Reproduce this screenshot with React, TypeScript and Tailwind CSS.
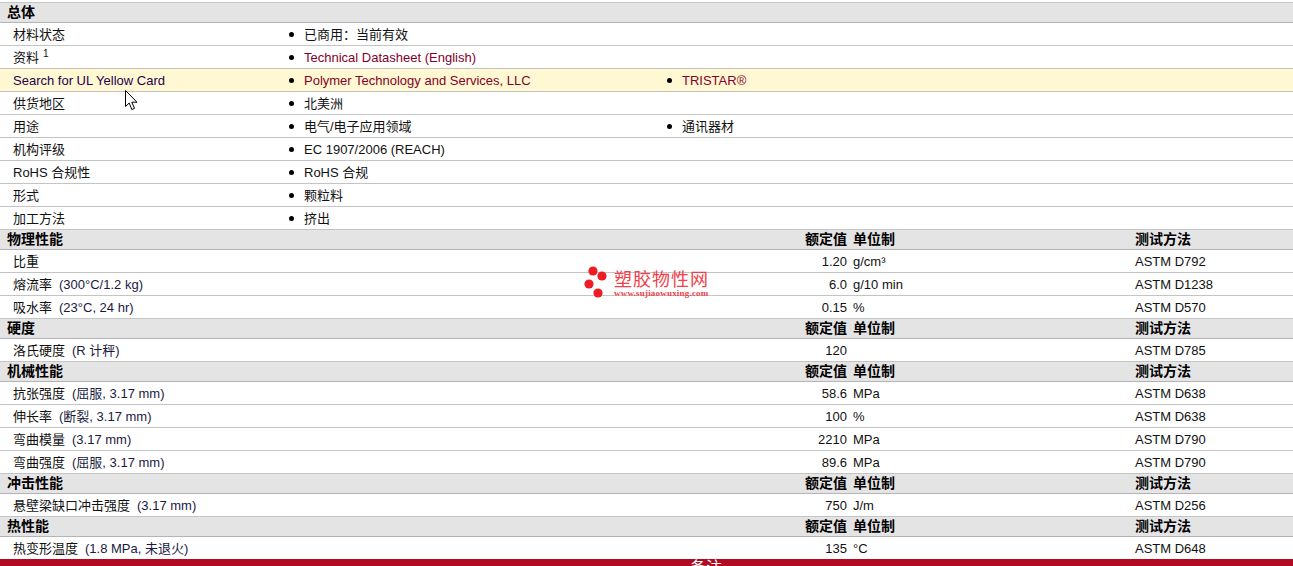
const sans = "font-['Liberation_Sans','Noto_Sans_CJK_SC',sans-serif]";

type Row = { label: string; note?: string; value?: string; unit?: string; method?: string };

function Bullet({ children, link }: { children: React.ReactNode; link?: boolean }) {
  return (
    <div className="flex items-center">
      <span className="ml-[1px] mr-[10px] h-[5px] w-[5px] rounded-full bg-black" />
      <span className={link ? "text-[#84002a]" : "text-[#111]"}>{children}</span>
    </div>
  );
}

function InfoRow({ label, sup, first, second, link, active }: { label: string; sup?: string; first: string; second?: string; link?: boolean; active?: boolean }) {
  return (
    <div className={`flex h-[23px] items-center border-b border-[#c4c4c4] pl-[13px] ${active ? "bg-[#fff8d2]" : "bg-white"}`}>
      <div className={`w-[275px] ${active ? "text-[#26004a]" : "text-[#111]"}`}>
        {label}
        {sup && <sup className="ml-[4px] text-[10px]">{sup}</sup>}
      </div>
      <div className="w-[378px]">
        <Bullet link={link}>{first}</Bullet>
      </div>
      {second && <Bullet link={link}>{second}</Bullet>}
    </div>
  );
}

function SectionHead({ title, columns = true }: { title: string; columns?: boolean }) {
  return (
    <div className="flex h-[20px] items-center border-b border-[#b4b4b8] bg-[#e5e4e4] pb-[2px] pl-[7px] text-[14px] font-bold text-black">
      <div className="w-[798px]">{title}</div>
      {columns && (
        <>
          <div className="w-[42px] text-right">额定值</div>
          <div className="ml-[6px] w-[282px]">单位制</div>
          <div>测试方法</div>
        </>
      )}
    </div>
  );
}

function DataRow({ label, note, value, unit, method }: Row) {
  return (
    <div className="flex h-[23px] items-center border-b border-[#c4c4c4] bg-white pl-[13px] text-[#111]">
      <div className="w-[792px]">
        {label}
        {note && <span className="ml-[7px] text-[#1a1a40]">{note}</span>}
      </div>
      <div className="w-[42px] text-right">{value}</div>
      <div className="ml-[6px] w-[282px]">{unit}</div>
      <div>{method}</div>
    </div>
  );
}

const sections: { title: string; rows: Row[] }[] = [
  {
    title: "物理性能",
    rows: [
      { label: "比重", value: "1.20", unit: "g/cm³", method: "ASTM D792" },
      { label: "熔流率", note: "(300°C/1.2 kg)", value: "6.0", unit: "g/10 min", method: "ASTM D1238" },
      { label: "吸水率", note: "(23°C, 24 hr)", value: "0.15", unit: "%", method: "ASTM D570" },
    ],
  },
  {
    title: "硬度",
    rows: [{ label: "洛氏硬度", note: "(R 计秤)", value: "120", method: "ASTM D785" }],
  },
  {
    title: "机械性能",
    rows: [
      { label: "抗张强度", note: "(屈服, 3.17 mm)", value: "58.6", unit: "MPa", method: "ASTM D638" },
      { label: "伸长率", note: "(断裂, 3.17 mm)", value: "100", unit: "%", method: "ASTM D638" },
      { label: "弯曲模量", note: "(3.17 mm)", value: "2210", unit: "MPa", method: "ASTM D790" },
      { label: "弯曲强度", note: "(屈服, 3.17 mm)", value: "89.6", unit: "MPa", method: "ASTM D790" },
    ],
  },
  {
    title: "冲击性能",
    rows: [{ label: "悬壁梁缺口冲击强度", note: "(3.17 mm)", value: "750", unit: "J/m", method: "ASTM D256" }],
  },
  {
    title: "热性能",
    rows: [{ label: "热变形温度", note: "(1.8 MPa, 未退火)", value: "135", unit: "°C", method: "ASTM D648" }],
  },
];

export default function App() {
  return (
    <div className={`relative h-[566px] overflow-hidden bg-white pt-[2px] text-[13px] leading-none ${sans}`}>
      <div className="border-t border-[#c4c4c4]">
        <SectionHead title="总体" columns={false} />
        <InfoRow label="材料状态" first="已商用：当前有效" />
        <InfoRow label="资料" sup="1" first="Technical Datasheet (English)" link />
        <InfoRow label="Search for UL Yellow Card" first="Polymer Technology and Services, LLC" second="TRISTAR®" link active />
        <InfoRow label="供货地区" first="北美洲" />
        <InfoRow label="用途" first="电气/电子应用领域" second="通讯器材" />
        <InfoRow label="机构评级" first="EC 1907/2006 (REACH)" />
        <InfoRow label="RoHS 合规性" first="RoHS 合规" />
        <InfoRow label="形式" first="颗粒料" />
        <InfoRow label="加工方法" first="挤出" />
        {sections.map((s) => (
          <div key={s.title}>
            <SectionHead title={s.title} />
            {s.rows.map((r) => (
              <DataRow key={r.label} {...r} />
            ))}
          </div>
        ))}
      </div>
      <div className="relative -mt-[1px] h-[20px] bg-[#b20a22] pl-[690px] pt-[1px] text-[16px] text-white">备注</div>

      {/* watermark */}
      <div className="absolute left-[584px] top-[265px] flex">
        <svg width="28" height="34" viewBox="0 0 28 34" fill="#ee1c25">
          <circle cx="9" cy="6" r="4.6" />
          <circle cx="18" cy="11" r="4.6" />
          <circle cx="5" cy="19" r="4.6" />
          <circle cx="14" cy="28" r="4.6" />
        </svg>
        <div className="ml-[2px] mt-[6px] text-[#f0414a]">
          <div className="text-[18px] leading-[18px] tracking-[1px]">塑胶物性网</div>
          <div className="font-['Liberation_Serif',serif] text-[9px] font-bold leading-[9px] tracking-[0.2px]">www.sujiaowuxing.com</div>
        </div>
      </div>

      {/* mouse pointer */}
      <svg className="absolute left-[125px] top-[90px]" width="13" height="21" viewBox="0 0 13 21">
        <path d="M0.5 0.5V16.5L4.2 13L6.8 19.5L9.5 18.4L6.8 12.2H12L0.5 0.5Z" fill="#fff" stroke="#000" strokeWidth="1" />
      </svg>
    </div>
  );
}
